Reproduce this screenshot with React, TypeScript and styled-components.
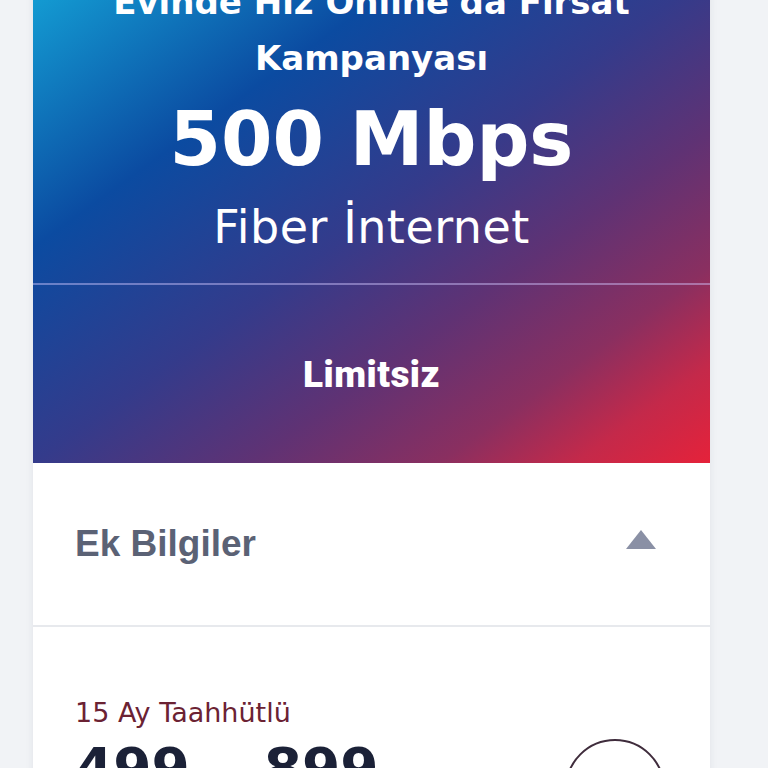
import styled, { createGlobalStyle } from 'styled-components';

const GlobalStyle = createGlobalStyle`
    html, body {
        margin: 0;
        padding: 0;
        background-color: #f1f3f6;
        overflow: hidden;
    }
`

const StyledPage = styled.div`
    display: flex;
    padding: 0 58px 0 33px;
    margin-top: -26px;
`

const StyledCard = styled.div`
    display: flex;
    flex-direction: column;
    width: 677px;
    background-color: white;
    box-shadow: 0 0 8px rgba(40, 50, 80, 0.08);
`

const StyledHero = styled.div`
    display: flex;
    flex-direction: column;
    color: white;
    background: linear-gradient(
        to bottom right,
        #14a3d7 0%,
        #0b4ba1 28%,
        #343b8b 50%,
        #5f3274 66%,
        #8a2f60 80%,
        #c4294a 90%,
        #e5223a 100%
    );
`

const StyledHeroTop = styled.div`
    display: flex;
    flex-direction: column;
    align-items: center;
    padding: 0 40px 28px;
    text-align: center;
    font-family: "DejaVu Sans", "Lato", sans-serif;
`

const StyledTitle = styled.div`
    font-size: 34px;
    font-weight: bold;
    line-height: 56px;
    width: 520px;
`

const StyledSpeed = styled.div`
    font-size: 74px;
    font-weight: bold;
    line-height: 1.2;
    margin-top: 9px;
`

const StyledType = styled.div`
    font-size: 46px;
    line-height: 1.2;
    letter-spacing: 0.5px;
    margin-top: 16px;
`

const StyledDivider = styled.div`
    height: 2px;
    background-color: rgba(210, 200, 255, 0.45);
`

const StyledHeroBottom = styled.div`
    display: flex;
    align-items: center;
    justify-content: center;
    height: 178px;
    padding-top: 2px;
    box-sizing: border-box;
    font-family: "Roboto", sans-serif;
    font-size: 37px;
    font-weight: 900;
    letter-spacing: 0.5px;
`

const StyledInfoRow = styled.div`
    display: flex;
    align-items: center;
    justify-content: space-between;
    height: 162px;
    padding: 0 54px 0 42px;
    border-bottom: 2px solid #e7e9ed;
`

const StyledInfoLabel = styled.div`
    font-family: "Liberation Sans", Arial, sans-serif;
    font-size: 37px;
    font-weight: bold;
    color: #5b6275;
`

const StyledArrow = styled.div`
    width: 0;
    height: 0;
    border-left: 15px solid transparent;
    border-right: 15px solid transparent;
    border-bottom: 19px solid #8a90a5;
    margin-top: -8px;
`

const StyledPriceSection = styled.div`
    display: flex;
    flex-direction: column;
    padding: 70px 45px 60px 42px;
`

const StyledCommitment = styled.div`
    font-family: "DejaVu Sans", "Lato", sans-serif;
    font-size: 27px;
    line-height: 1.2;
    color: #6b2233;
`

const StyledPriceRow = styled.div`
    display: flex;
    align-items: flex-start;
    justify-content: space-between;
    margin-top: 10px;
`

const StyledPrices = styled.div`
    display: flex;
    align-items: baseline;
    gap: 12px;
    margin-top: 2px;
    font-family: "DejaVu Sans", "Lato", sans-serif;
    color: #1b2137;
`

const StyledPrice = styled.span`
    font-size: 55px;
    font-weight: bold;
    line-height: 1;
`

const StyledCurrency = styled.span`
    font-size: 20px;
    font-weight: bold;
    width: 50px;
`

const StyledCircle = styled.div`
    width: 96px;
    height: 96px;
    border-radius: 50%;
    border: 2px solid #3f2c3c;
`

export default function App() {
    return (
        <>
            <GlobalStyle />
            <StyledPage>
                <StyledCard>
                    <StyledHero>
                        <StyledHeroTop>
                            <StyledTitle>Evinde Hız Online'da Fırsat Kampanyası</StyledTitle>
                            <StyledSpeed>500 Mbps</StyledSpeed>
                            <StyledType>Fiber İnternet</StyledType>
                        </StyledHeroTop>
                        <StyledDivider />
                        <StyledHeroBottom>Limitsiz</StyledHeroBottom>
                    </StyledHero>
                    <StyledInfoRow>
                        <StyledInfoLabel>Ek Bilgiler</StyledInfoLabel>
                        <StyledArrow />
                    </StyledInfoRow>
                    <StyledPriceSection>
                        <StyledCommitment>15 Ay Taahhütlü</StyledCommitment>
                        <StyledPriceRow>
                            <StyledPrices>
                                <StyledPrice>499</StyledPrice>
                                <StyledCurrency>TL</StyledCurrency>
                                <StyledPrice>899</StyledPrice>
                                <StyledCurrency>TL</StyledCurrency>
                            </StyledPrices>
                            <StyledCircle />
                        </StyledPriceRow>
                    </StyledPriceSection>
                </StyledCard>
            </StyledPage>
        </>
    )
}
